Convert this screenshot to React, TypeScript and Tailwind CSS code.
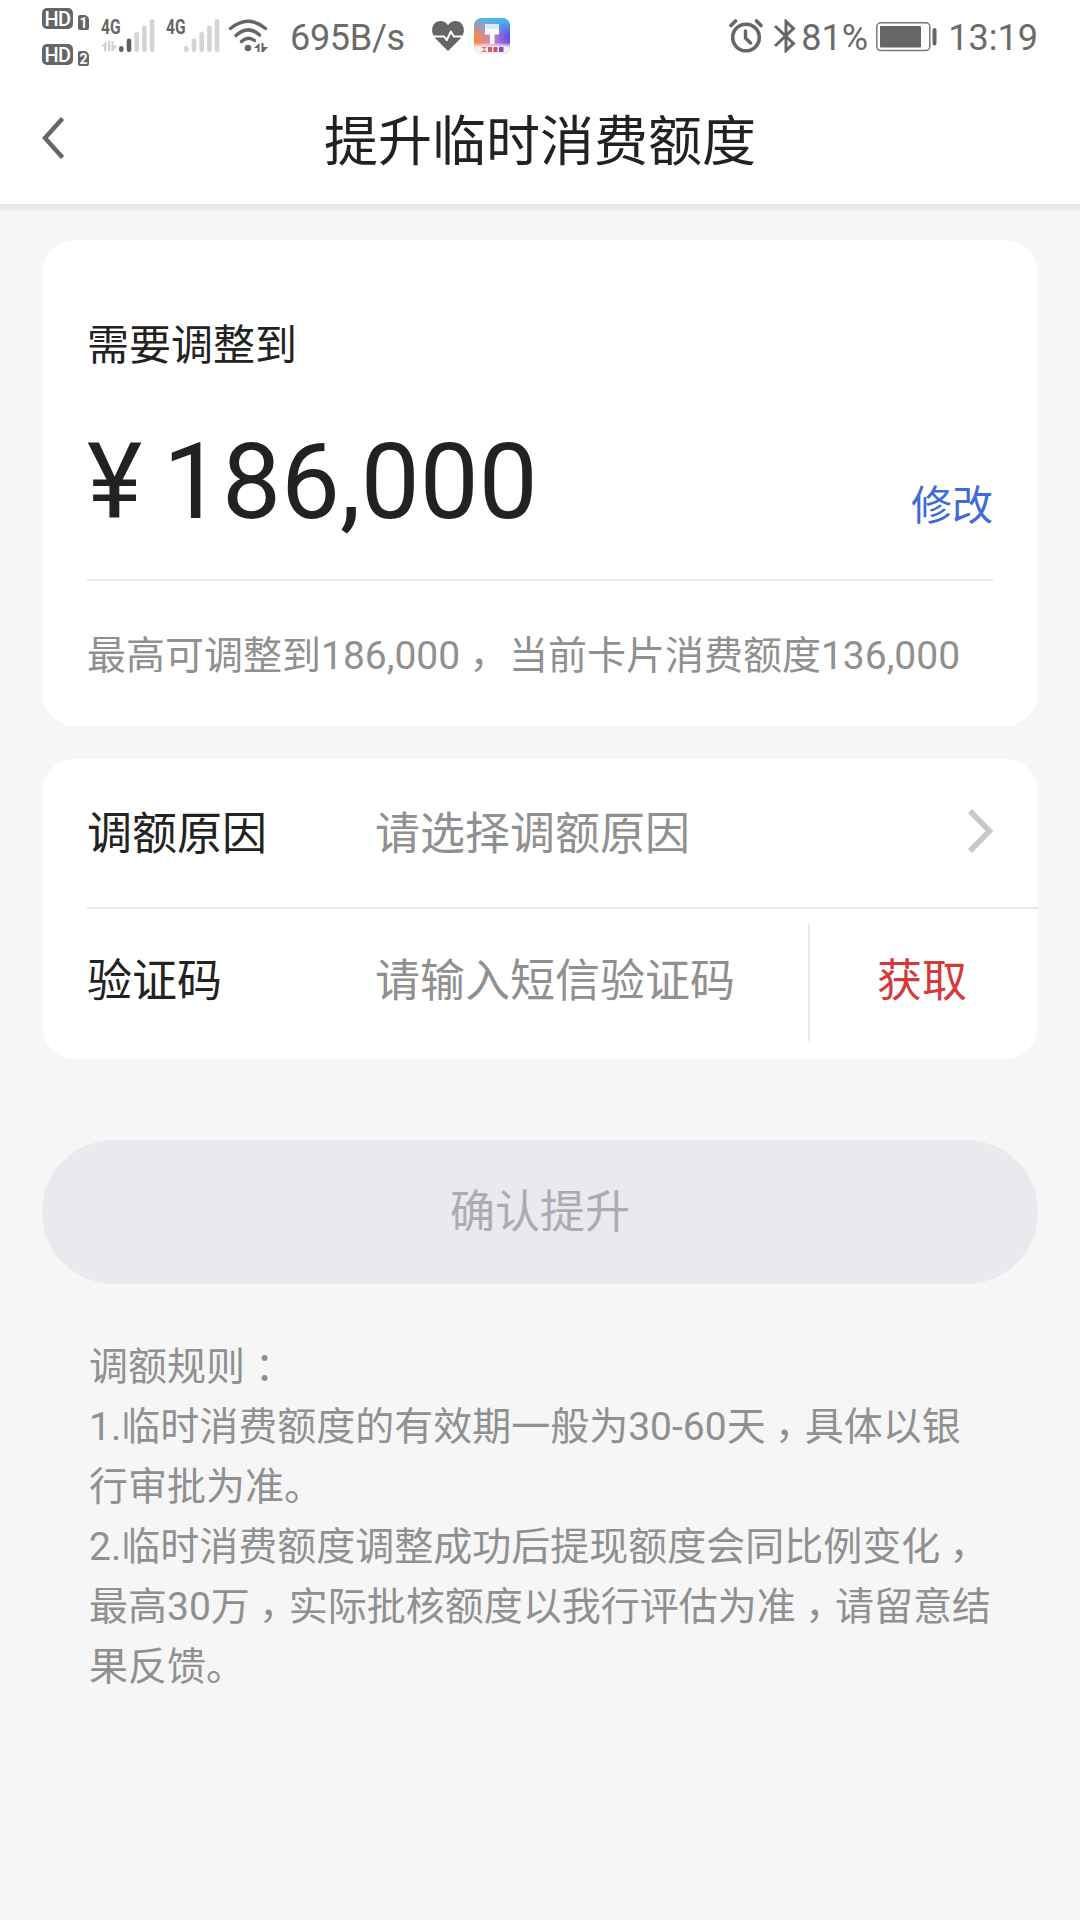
import React from 'react';

const FONT = "font-['Roboto','Noto_Sans_CJK_SC',sans-serif]";

const HdBadge: React.FC<{ sim: string }> = ({ sim }) => (
  <div className="flex items-end gap-[5px] h-5">
    <div className="w-[31px] h-[21px] rounded-[5px] bg-[#666] text-white text-[20px] leading-[22px] font-medium text-center tracking-tight">
      HD
    </div>
    <div className="w-[11px] h-[15px] -mb-[1px] rounded-[2px] rounded-tr-[5px] bg-[#666] text-white text-[14px] leading-[16px] font-bold text-center">
      {sim}
    </div>
  </div>
);

const BAR_TOPS = [46, 38.5, 32, 25.5, 19];

const Signal: React.FC<{ active: number; arrows?: boolean }> = ({ active, arrows }) => (
  <div className="flex w-[54px] h-[72px]">
    <div className="w-[18px] pt-[18px]">
      <div className="w-[26px] origin-left scale-x-[0.74] text-[21px] leading-[19px] font-bold text-[#666]">4G</div>
      {arrows && (
        <svg width="16" height="12" viewBox="0 0 16 12" className="mt-[3px] fill-[#cfcfcf]">
          <path d="M5.500 1v10H3V6.500H0zM7 1h2.300v10H7zM10.500 1h2v4.500H16L12 11h-1.500z" />
        </svg>
      )}
    </div>
    <svg width="36" height="72" viewBox="0 0 36 72">
      {BAR_TOPS.map((top, i) => (
        <rect key={top} x={i * 7.7} y={top} width="4.6" height={52 - top} rx="2.2" fill={i < active ? '#606060' : '#d4d4d4'} />
      ))}
    </svg>
  </div>
);

const WifiIcon = () => (
  <svg width="40" height="34" viewBox="0 0 40 34" fill="none" stroke="#666" strokeWidth="3.4" strokeLinecap="round">
    <path d="M2.500 9.500Q20 -5 37.500 9.500" />
    <path d="M8 16.500Q20 5.500 31.500 16" />
    <path d="M13.500 22.500Q20 16.500 26.500 21.500" />
    <circle cx="20" cy="29" r="3.3" fill="#666" stroke="none" />
    <path d="M31.500 24v9h-2v-4H26zM33.500 24h2v4H40l-4.500 5h-2z" fill="#666" stroke="none" />
  </svg>
);

const HeartIcon = () => (
  <svg width="34" height="32" viewBox="0 0 34 32">
    <path d="M17 31L4.500 18.500C-2 11.500 1.500 1 9.500 1c3.500 0 6 1.700 7.500 4.200C18.500 2.700 21 1 24.500 1c8 0 11.500 10.500 5 17.500z" fill="#666" />
    <path d="M0 16.500h13l2.700 3.700 4.200-8.700 3 5h11" fill="none" stroke="#fff" strokeWidth="2" strokeLinejoin="round" />
  </svg>
);

const AppIcon = () => (
  <svg width="36" height="36" viewBox="0 0 36 36">
    <defs>
      <linearGradient id="app-bg" x1="0" y1="0.6" x2="1" y2="0.4">
        <stop offset="0" stopColor="#f8883c" />
        <stop offset="0.45" stopColor="#c98ac8" />
        <stop offset="1" stopColor="#5a45ea" />
      </linearGradient>
      <linearGradient id="app-sky" x1="0.3" y1="0" x2="0.2" y2="1">
        <stop offset="0" stopColor="#46b8f0" />
        <stop offset="0.45" stopColor="#46b4ee" stopOpacity="0" />
      </linearGradient>
      <linearGradient id="app-floor" x1="0" y1="0" x2="0" y2="1">
        <stop offset="0.68" stopColor="#fff" stopOpacity="0" />
        <stop offset="0.82" stopColor="#fdf0f0" />
      </linearGradient>
    </defs>
    <rect width="36" height="36" rx="8" fill="url(#app-bg)" />
    <rect width="36" height="36" rx="8" fill="url(#app-sky)" />
    <rect width="36" height="36" rx="8" fill="url(#app-floor)" />
    <path d="M11 6h14v10.500h-4.500V26h-4.500v-9.500H11z" fill="#fff" />
    <path d="M11 6h14v5H11z" fill="#d6eef2" />
    <path d="M8 29.500h4.500M10.200 29.500v4M7.500 33.500h5" stroke="#d9705a" strokeWidth="1.2" />
    <path d="M14 29h4v5h-4z" fill="#d4605c" />
    <path d="M19.500 29h4v5h-4z" fill="#c8506e" />
    <path d="M25 29h4.500v5H25z" fill="#7d4fb8" />
  </svg>
);

const AlarmIcon = () => (
  <svg width="34" height="34" viewBox="0 0 34 34" fill="none" stroke="#666" strokeWidth="3.6" strokeLinecap="round">
    <circle cx="17" cy="18.5" r="13.3" />
    <path d="M16.500 12v7l5 5" strokeWidth="3.4" />
    <path d="M2 6.500l4.500-4.500M27.500 2l4.500 4.500" />
  </svg>
);

const BluetoothIcon = () => (
  <svg width="22" height="34" viewBox="0 0 22 34" fill="none" stroke="#666" strokeWidth="3">
    <path d="M1 7l18.500 17.500L12 31.500V2.500l7.500 7L1 27" />
  </svg>
);

const BatteryIcon = () => (
  <svg width="62" height="30" viewBox="0 0 62 30">
    <rect x="0.8" y="0.8" width="53" height="27.8" rx="4" fill="none" stroke="#777" strokeWidth="1.5" />
    <rect x="4" y="4" width="41" height="21.5" rx="1" fill="#666" />
    <rect x="56.5" y="6" width="4" height="17.5" rx="2" fill="#666" />
  </svg>
);

const StatusBar = () => (
  <div className="flex justify-between h-[72px] pl-[42px] pr-[42px] text-[36px] leading-[76px] text-[#6b6b6b]">
    <div className="flex">
      <div className="flex flex-col gap-4 w-[59px] pt-[9px]">
        <HdBadge sim="1" />
        <HdBadge sim="2" />
      </div>
      <Signal active={2} arrows />
      <div className="w-[11px]" />
      <Signal active={0} />
      <div className="pt-[19px] pl-[8px] w-[60px]">
        <WifiIcon />
      </div>
      <div className="w-[141px] pl-[10px] tracking-[-0.3px]">695B/s</div>
      <div className="pt-[20px] pl-[10px] w-[53px]">
        <HeartIcon />
      </div>
      <div className="pt-[18px]">
        <AppIcon />
      </div>
    </div>
    <div className="flex">
      <div className="pt-[19px] w-[45px]">
        <AlarmIcon />
      </div>
      <div className="pt-[19px] w-[27px]">
        <BluetoothIcon />
      </div>
      <div className="w-[75px]">81%</div>
      <div className="pt-[22px] w-[72px]">
        <BatteryIcon />
      </div>
      <div>13:19</div>
    </div>
  </div>
);

// centred full-width punctuation, the comma lowered to the baseline
const Comma = () => (
  <span className="inline-block translate-x-[-1px] translate-y-[10px] leading-[40px] font-['Noto_Sans_CJK_TC']" lang="zh-TW">，</span>
);

const Colon = () => (
  <span className="inline-block translate-y-[2px] leading-[40px] font-['Noto_Sans_CJK_TC']" lang="zh-TW">：</span>
);

const App: React.FC = () => {
  return (
    <div className={`w-[1080px] h-[1920px] bg-[#f6f6f6] text-[#222] overflow-hidden ${FONT}`} lang="zh-CN">
      <div className="h-[204px] bg-white">
        <StatusBar />
        <div className="flex items-center h-[132px] px-[42px]">
          <svg width="24" height="42" viewBox="0 0 24 42" fill="none" stroke="#666" strokeWidth="4.5">
            <path d="M20.500 1.500L3 21l17.500 19.500" />
          </svg>
          <h1 className="flex-1 pr-6 pt-[9px] text-center text-[54px] leading-[60px]">提升临时消费额度</h1>
        </div>
      </div>
      <div className="h-2 bg-linear-to-b from-[#e9e9e9] from-40% to-[#f4f4f4]" />

      <div className="px-[42px] pt-7">
        <div className="h-[486px] rounded-[33px] bg-white px-[45px] pt-[76px]">
          <div className="text-[42px] leading-[60px]">需要调整到</div>
          <div className="flex items-end justify-between h-[205px] border-b-2 border-[#e8e8e8]">
            <div className="flex text-[105px] leading-[120px] pb-[36px]">
              <span className="w-[76px]">
                <span className="inline-block">¥</span>
              </span>
              <span>186,000</span>
            </div>
            <span className="text-[41px] leading-[48px] pb-[49px] text-[#4169d8]">修改</span>
          </div>
          <div className="pt-[45px] text-[39px] leading-[60px] text-[#909090] whitespace-pre">
            最高可调整到186,000<Comma /> 当前卡片消费额度136,000
          </div>
        </div>

        <div className="mt-[33px] h-[300px] rounded-[33px] bg-white pl-[45px] text-[45px] leading-[60px]">
          <div className="flex items-center h-[150px] border-b-2 border-[#e8e8e8] pr-[45px]">
            <span className="w-[288px] pt-1">调额原因</span>
            <span className="flex-1 pt-1 text-[#909090]">请选择调额原因</span>
            <svg width="26" height="44" viewBox="0 0 26 44" fill="none" stroke="#c8c8ca" strokeWidth="5.5" className="-mt-[4px]">
              <path d="M3 2L22.500 22 3 42" />
            </svg>
          </div>
          <div className="flex items-center h-[146px]">
            <span className="w-[288px]">验证码</span>
            <span className="flex-1 text-[#909090]">请输入短信验证码</span>
            <div className="w-[230px] h-[117px] border-l-2 border-[#e8e8e8] pr-1 flex items-center justify-center text-[#d43a3a]">
              获取
            </div>
          </div>
        </div>

        <button className="mt-[81px] pt-[2px] w-full h-36 rounded-full bg-[#e9e9ee] text-[45px] leading-[60px] text-[#acacb0]">
          确认提升
        </button>

        <div className="mt-[53px] pl-[47px] text-[39px] leading-[60px] text-[#909090] whitespace-nowrap">
          <p>调额规则<Colon /></p>
          <p>1.临时消费额度的有效期一般为30-60天<Comma />具体以银</p>
          <p>行审批为准。</p>
          <p>2.临时消费额度调整成功后提现额度会同比例变化<Comma /></p>
          <p>最高30万<Comma />实际批核额度以我行评估为准<Comma />请留意结</p>
          <p>果反馈。</p>
        </div>
      </div>
    </div>
  );
};

export default App;
